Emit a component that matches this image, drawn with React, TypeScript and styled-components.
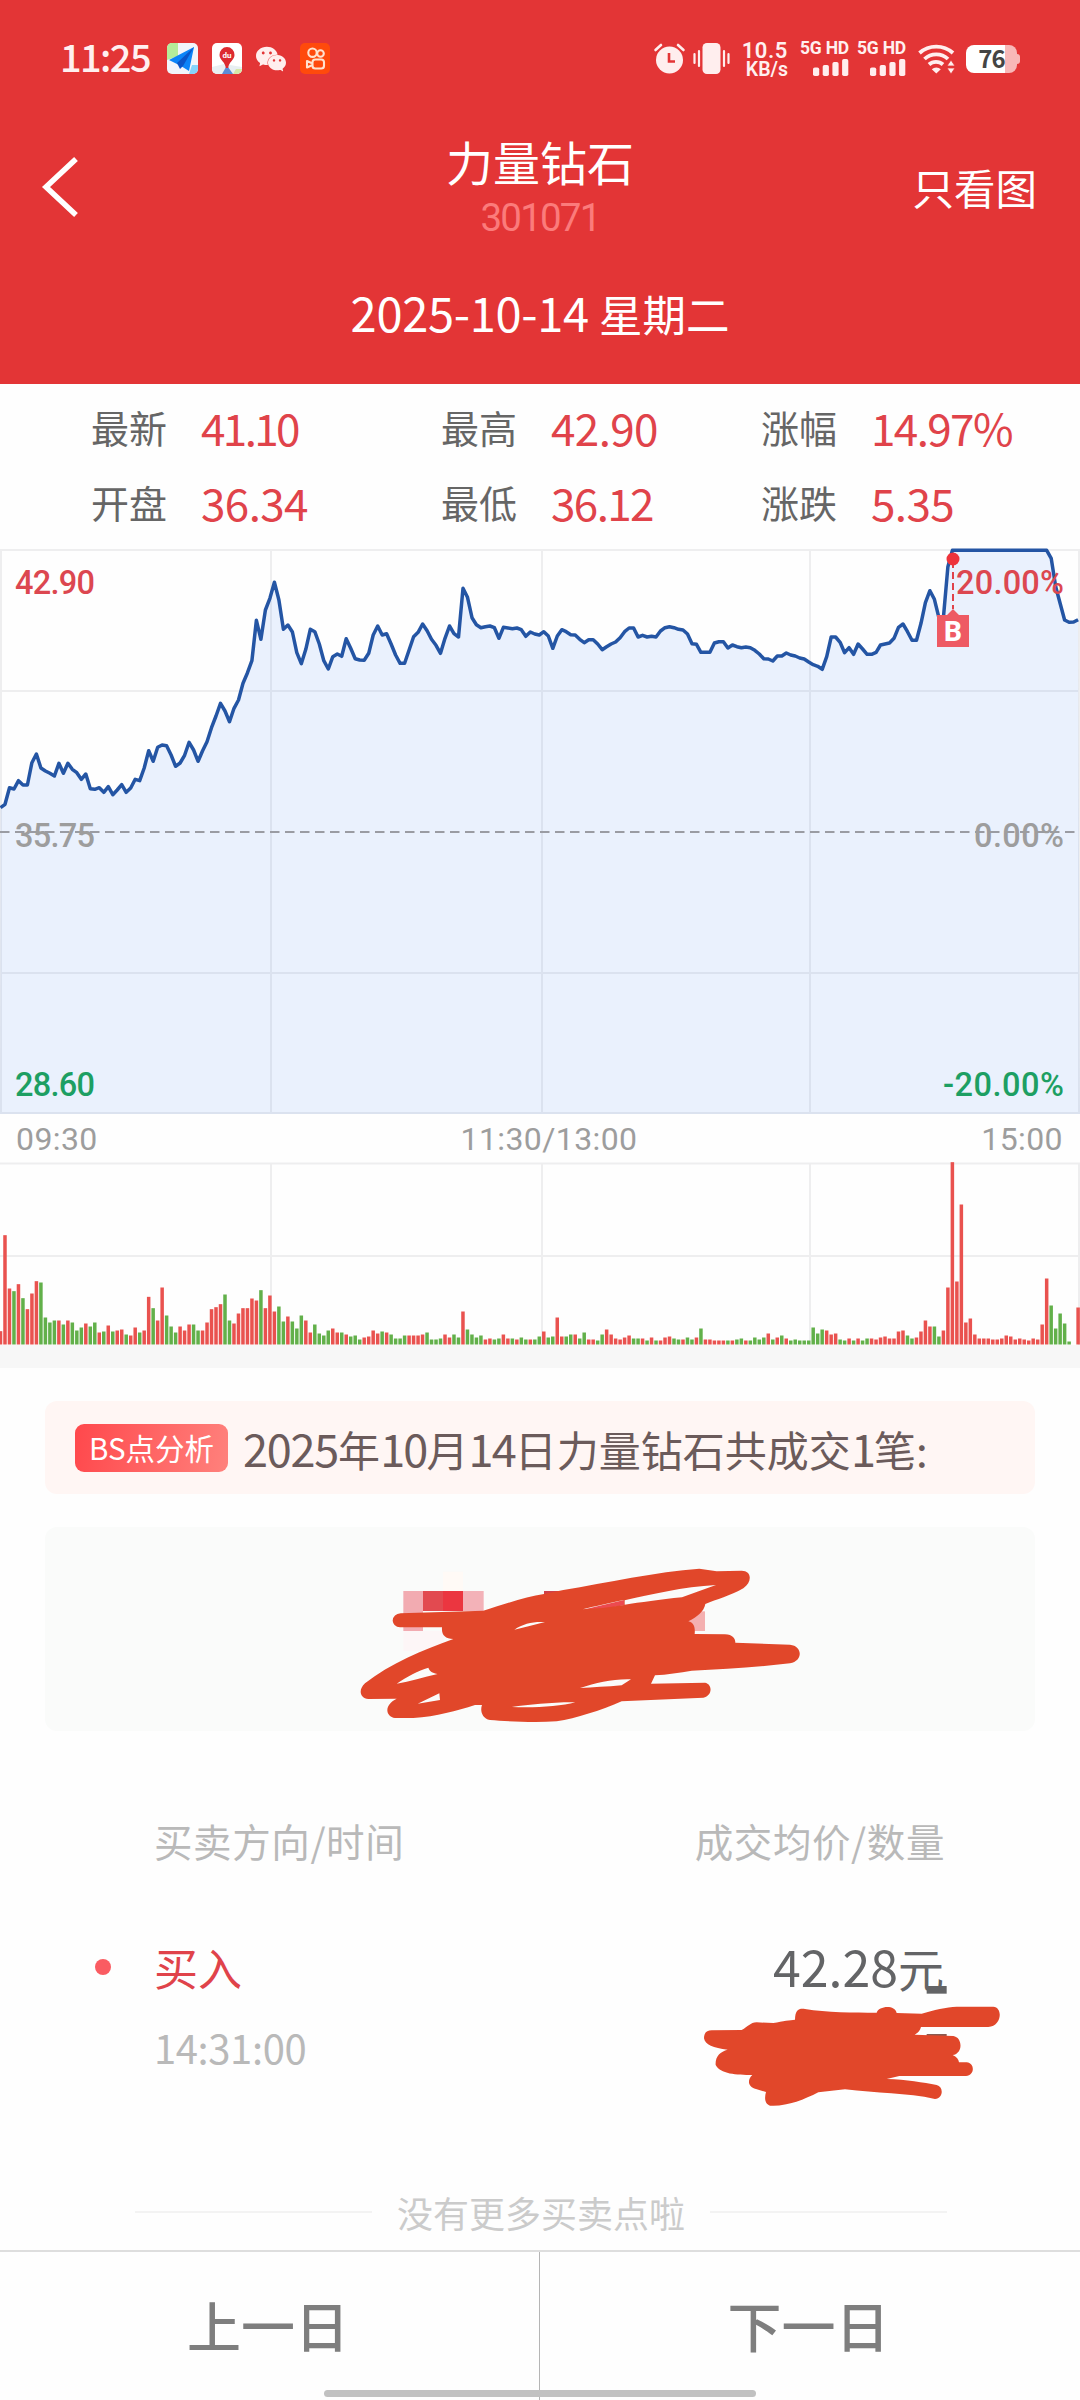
import React from "react";
import styled, { createGlobalStyle } from "styled-components";
import { SiWechat } from "react-icons/si";

const GlobalStyle = createGlobalStyle`
  * { box-sizing: border-box; }
  html, body { margin: 0; padding: 0; background: #fff; }
  body { font-family: "Noto Sans CJK SC", "Noto Sans", sans-serif; }
  svg { display: block; flex: none; overflow: visible; }
`;

const RED = "#e33536";
const INK = "#e1472a";

/* ---------- layout ---------- */

const Screen = styled.div`
  width: 1080px;
  height: 2400px;
  display: flex;
  flex-direction: column;
  background: #fefefe;
  overflow: hidden;
`;

const Header = styled.header`
  height: 384px;
  flex: none;
  background: ${RED};
  color: #fff;
  display: flex;
  flex-direction: column;
`;

const StatusBar = styled.div`
  height: 117px;
  padding: 0 63px 0 60px;
  display: flex;
  align-items: center;
  color: #fff0f0;
`;

const Clock = styled.span`
  width: 107px;
  padding-bottom: 5px;
  font-size: 38px;
  font-weight: 500;
  line-height: 40px;
  letter-spacing: -1.6px;
  white-space: nowrap;
`;

const AppIcons = styled.div`
  display: flex;
  align-items: center;
  gap: 14px;
`;

const StatusRight = styled.div`
  margin-left: auto;
  display: flex;
  align-items: center;
`;

const Speed = styled.div`
  width: 46px;
  margin: 0 12px 0 12px;
  display: flex;
  flex-direction: column;
  align-items: flex-end;
  font-family: Roboto, "Noto Sans", sans-serif;
  font-weight: 600;
  font-size: 19.5px;
  line-height: 17px;
  white-space: nowrap;
`;

const SpeedValue = styled.span`
  font-size: 22px;
  line-height: 21px;
  letter-spacing: 0.6px;
`;

const Signal = styled.div`
  width: 49px;
  margin-right: 8px;
  display: flex;
  flex-direction: column;
  align-items: flex-end;
  gap: 4px;
  font-family: Roboto, "Noto Sans", sans-serif;
  font-weight: 700;
  font-size: 17.5px;
  line-height: 13px;
  letter-spacing: -0.2px;
  white-space: nowrap;
`;

const Battery = styled.div`
  width: 51px;
  height: 28px;
  margin-left: 11px;
  border-radius: 8px;
  position: relative;
  display: flex;
  align-items: center;
  justify-content: center;
  background: linear-gradient(90deg, #fff 76%, #f8b8b8 76%);
  color: #444;
  font-size: 24px;
  font-weight: 700;
  letter-spacing: -1px;
  line-height: 26px;
  padding-bottom: 2px;
  &::after {
    content: "";
    position: absolute;
    right: -3px;
    top: 9px;
    width: 4px;
    height: 10px;
    border-radius: 0 3px 3px 0;
    background: #f8b8b8;
  }
`;

const NavBar = styled.div`
  height: 137px;
  display: grid;
  grid-template-columns: 300px 1fr 300px;
  align-items: center;
  padding-top: 2px;
`;

const Back = styled.div`
  padding-left: 42px;
`;

const TitleBlock = styled.div`
  display: flex;
  flex-direction: column;
  align-items: center;
`;

const Title = styled.div`
  font-size: 47px;
  line-height: 56px;
`;

const Code = styled.div`
  font-family: Roboto, "Noto Sans", sans-serif;
  font-size: 38.5px;
  line-height: 44px;
  padding-top: 7px;
  letter-spacing: -1.8px;
  color: #fb7b7b;
`;

const NavAction = styled.div`
  justify-self: end;
  padding: 0 43px 0 0;
  font-size: 41.5px;
  line-height: 50px;
`;

const DateLine = styled.div`
  flex: 1;
  display: flex;
  justify-content: center;
  align-items: baseline;
  gap: 10px;
  padding-top: 23px;
  font-size: 43.5px;
  line-height: 70px;
`;

const Digits = styled.span<{ $size: number; $track?: number }>`
  font-size: ${(p) => p.$size}px;
  letter-spacing: ${(p) => p.$track ?? 0}px;
`;

const Stats = styled.section`
  height: 165px;
  flex: none;
  padding: 5px 0 0 91px;
  display: grid;
  grid-template-columns: 350px 320px 1fr;
  grid-auto-rows: 75px;
`;

const Stat = styled.div`
  display: flex;
  align-items: center;
`;

const StatLabel = styled.span`
  width: 110px;
  font-size: 38px;
  line-height: 50px;
  color: #666;
`;

const StatValue = styled.span<{ $track: number }>`
  font-size: 44px;
  line-height: 50px;
  color: #e0434a;
  letter-spacing: ${(p) => p.$track}px;
`;

const TimeAxis = styled.div`
  height: 48px;
  flex: none;
  padding: 0 17px 0 16px;
  display: grid;
  grid-template-columns: 1fr auto 1fr;
  align-items: center;
  font-family: Roboto, "Noto Sans", sans-serif;
  font-size: 32px;
  color: #9d9d9d;
  letter-spacing: 0.4px;
  & > :nth-child(2) { padding-left: 19px; }
  & > :last-child { text-align: right; }
`;

const Band = styled.div`
  height: 23px;
  flex: none;
  background: #f7f7f7;
`;

const Notice = styled.section`
  margin: 33px 45px 0;
  height: 93px;
  flex: none;
  border-radius: 12px;
  background: #fff6f4;
  display: flex;
  align-items: center;
  padding: 1px 0 0 30px;
  gap: 15px;
  font-size: 42px;
  color: #6b5b5b;
  white-space: nowrap;
`;

const Badge = styled.span`
  width: 153px;
  height: 48px;
  border-radius: 9px;
  background: linear-gradient(100deg, #ff484c, #ff817c);
  color: #fff;
  font-size: 29.5px;
  line-height: 46px;
  text-align: center;
`;

const NoticeText = styled.span`
  display: flex;
  align-items: baseline;
  line-height: 60px;
`;

const HiddenCard = styled.section`
  margin: 33px 45px 0;
  height: 204px;
  flex: none;
  border-radius: 12px;
  background: #fafbfa;
  padding: 13px 0 0 295px;
`;

const TableHead = styled.div`
  margin-top: 79px;
  height: 60px;
  flex: none;
  padding: 0 135px 0 154px;
  display: flex;
  justify-content: space-between;
  align-items: center;
  font-size: 38.5px;
  letter-spacing: 0.6px;
  color: #b9b9b9;
`;

const Trade = styled.div`
  margin-top: 62px;
  height: 221px;
  flex: none;
  padding: 0 136px 0 95px;
  display: flex;
  position: relative;
`;

const Dot = styled.i`
  width: 16px;
  height: 16px;
  margin: 27px 43px 0 0;
  border-radius: 50%;
  background: #fa5c62;
`;

const TradeCol = styled.div<{ $end?: boolean }>`
  display: flex;
  flex-direction: column;
  ${(p) => p.$end && "margin-left: auto; align-items: flex-end;"}
`;

const Side = styled.div`
  font-size: 44px;
  line-height: 70px;
  color: #e0434a;
`;

const Time = styled.div`
  margin-top: 15px;
  font-size: 40px;
  line-height: 60px;
  letter-spacing: -0.4px;
  color: #b9b9b9;
`;

const Price = styled.div`
  display: flex;
  align-items: baseline;
  font-size: 46px;
  line-height: 66px;
  color: #636466;
`;

const TradeMask = styled.svg`
  position: absolute;
  left: 660px;
  top: -12px;
`;

const EndNote = styled.div`
  height: 60px;
  flex: none;
  margin-top: 29px;
  padding: 0 133px 0 135px;
  display: flex;
  align-items: center;
  justify-content: space-between;
  font-size: 36px;
  color: #cbcbcb;
`;

const Rule = styled.i`
  width: 237px;
  height: 2px;
  background: #f3f3f3;
`;

const Footer = styled.footer`
  margin-top: auto;
  height: 150px;
  flex: none;
  border-top: 2px solid #dedede;
  display: grid;
  grid-template-columns: 1fr 1fr;
  position: relative;
`;

const DayButton = styled.button<{ $divided?: boolean }>`
  border: 0;
  padding: 0 3px 2px 0;
  background: none;
  font: 500 54px/60px "Noto Sans CJK SC", sans-serif;
  color: #7e7e7e;
  ${(p) => p.$divided && "border-right: 1px solid #b5b5b5;"}
`;

const HomeBar = styled.i`
  position: absolute;
  left: 324px;
  bottom: 3px;
  width: 432px;
  height: 7px;
  border-radius: 4px;
  background: #c1c1c1;
`;

/* ---------- chart data, one sample per minute ---------- */

const STEP = 4.49;
const minuteX = (i: number) => 0.5 + i * STEP;

// Price samples, measured downwards in thirds of a pixel.
const PRICES = [
  1253, 1243, 1193, 1197, 1172, 1185, 1185, 1118, 1092, 1134, 1143, 1150, 1158, 1120, 1150, 1120, 1138, 1148, 1168, 1152,
  1196, 1198, 1193, 1207, 1190, 1214, 1200, 1184, 1207, 1194, 1168, 1172, 1134, 1082, 1114, 1072, 1065, 1067, 1095, 1129,
  1119, 1096, 1057, 1080, 1114, 1082, 1055, 1013, 978, 940, 963, 995, 955, 930, 880, 848, 812, 691, 748, 660,
  625, 577, 630, 718, 705, 726, 788, 821, 778, 718, 725, 762, 812, 837, 800, 792, 799, 746, 775, 806,
  810, 811, 790, 735, 708, 735, 731, 762, 795, 820, 820, 780, 740, 727, 702, 722, 748, 766, 790, 745,
  708, 731, 741, 595, 622, 683, 704, 713, 710, 708, 713, 745, 712, 714, 716, 714, 719, 739, 726, 732,
  735, 725, 738, 775, 738, 719, 725, 734, 735, 748, 758, 749, 749, 762, 779, 770, 762, 756, 743, 725,
  714, 714, 741, 736, 741, 739, 741, 723, 713, 710, 713, 718, 720, 732, 761, 763, 787, 787, 787, 759,
  755, 755, 774, 765, 770, 773, 771, 773, 781, 792, 806, 807, 813, 798, 798, 789, 795, 798, 804, 807,
  816, 824, 829, 838, 800, 741, 741, 757, 788, 773, 793, 762, 777, 793, 793, 787, 765, 762, 759, 745,
  712, 702, 725, 751, 751, 700, 638, 602, 628, 683, 683, 530, 481, 481, 481, 481, 481, 481, 481, 481,
  481, 481, 481, 481, 481, 481, 481, 481, 481, 481, 481, 481, 481, 481, 505, 590, 640, 690, 697, 696, 689,
];

// Volume samples in thirds of a pixel; negative values are falling minutes.
const VOLUMES = [
  40, 328, 168, -160, 181, -139, 106, 153, 190, -186, -81, -66, -72, 72, -60, 72, -66, -42, -51, 63,
  -54, -66, 36, -39, 57, -39, 42, 45, -30, 27, 51, -36, 42, 143, -109, 72, 171, -87, -54, -36,
  54, 42, 60, -60, -42, 42, 66, 106, 112, 121, -150, -72, 63, 93, 109, 109, 138, 132, -163, 109,
  147, 99, -114, -69, 84, -69, -48, -87, 72, 36, -60, -33, -27, -42, 48, 36, -36, 30, -24, -27,
  -15, 21, 24, 42, 33, -39, 36, -30, -18, -18, -27, 27, 27, 27, 30, -36, -15, -15, -18, 30,
  21, -30, -21, 99, -45, -30, -21, -27, 15, 18, -15, -18, 30, 18, -18, 15, -21, -15, 15, -15,
  -24, 39, -21, -24, 81, 24, -24, -30, 30, -18, -36, 15, 15, -12, -30, 45, 30, 18, 15, 21,
  27, -18, -18, 18, -12, 21, -12, 12, 21, 24, -18, -15, 15, -21, -15, 21, -48, 15, 15, 12,
  12, 12, -12, 12, -15, -18, 12, -12, -21, -15, -21, 33, -15, 21, -27, 18, -12, -15, -12, -12,
  -12, -51, -33, -45, 42, 30, 33, -15, -12, 18, -12, 18, -12, -18, 18, 15, 21, 24, 18, 18,
  39, 42, -27, -18, 21, 39, 72, 54, -54, -24, 42, 171, 547, 189, 420, 66, 78, 30, 18, 18,
  18, 15, 15, 18, 27, 24, 15, 18, 15, 12, 18, 15, 60, 198, -117, -48, -93, -63, -9, 0, 111,
];

const GRID_X = [1, 271, 542, 810, 1079];

function PriceChart() {
  const line = PRICES.map((v, i) => `${minuteX(i).toFixed(1)},${((v - 480) / 3 + 1).toFixed(1)}`).join(" ");
  const label = { fontFamily: 'Roboto, "Noto Sans", sans-serif', fontSize: 32.5, fontWeight: 500 };
  return (
    <svg width="1080" height="566" viewBox="0 0 1080 566">
      <g stroke="#eeeeef" strokeWidth="2">
        {[1, 142, 424, 564].map((y) => <line key={y} x1="0" x2="1080" y1={y} y2={y} />)}
        {GRID_X.map((x) => <line key={x} x1={x} x2={x} y1="1" y2="564" />)}
      </g>
      <polygon points={`0,565 ${line} 1080,565`} fill="#4a86f5" fillOpacity="0.11" />
      <line x1="0" x2="1080" y1="283" y2="283" stroke="#9a9ca3" strokeWidth="2" strokeDasharray="9.5 5.5" />
      <polyline points={line} fill="none" stroke="#2455a4" strokeWidth="3.5" strokeLinejoin="round" />
      <line x1="953" x2="953" y1="12" y2="60" stroke="#e0434a" strokeWidth="2" strokeDasharray="7 4" />
      <circle cx="953" cy="10" r="6.5" fill="#ee333b" />
      <path d="M937 66h10l6-6 6 6h10v32h-32z" fill="#ee5a63" />
      <text x="953" y="92" textAnchor="middle" fill="#fff" fontFamily="Roboto, sans-serif" fontSize="28" fontWeight="800">B</text>
      <g {...label}>
        <text x="15" y="44.5" textLength="80" fill="#dc4750">42.90</text>
        <text x="956" y="44.5" textLength="108" fill="#dc4750">20.00%</text>
        <text x="15" y="297.5" textLength="80" fill="#9d9d9d">35.75</text>
        <text x="974" y="297.5" textLength="90" fill="#9d9d9d">0.00%</text>
        <text x="15" y="547" textLength="80" fill="#1d9f63">28.60</text>
        <text x="943" y="547" textLength="121" fill="#1d9f63">-20.00%</text>
      </g>
    </svg>
  );
}

function VolumeChart() {
  return (
    <svg width="1080" height="182" viewBox="0 0 1080 182">
      <g stroke="#eeeeef" strokeWidth="2">
        <line x1="0" x2="1080" y1="0.5" y2="0.5" />
        <line x1="0" x2="1080" y1="93" y2="93" />
        {GRID_X.slice(1).map((x) => <line key={x} x1={x} x2={x} y1="1" y2="182" />)}
      </g>
      {VOLUMES.map((v, i) => {
        const h = Math.abs(v) / 3;
        return <rect key={i} x={minuteX(i) - 1.75} y={181.5 - h} width="3.5" height={h} fill={v < 0 ? "#62b04a" : "#e9524f"} />;
      })}
    </svg>
  );
}

/* ---------- status icons ---------- */

const NavigatorIcon = () => (
  <svg width="31" height="31" viewBox="0 0 31 31">
    <rect width="31" height="31" rx="5" fill="#f1f5fb" />
    <path d="M0 5a5 5 0 0 1 5-5h6v13L0 17z" fill="#b5ec9a" />
    <path d="M22 31l3-9h6v4a5 5 0 0 1-5 5z" fill="#86d3fb" />
    <path d="M2 17L27 4 22 28 14 23z" fill="#0b84f8" />
    <path d="M27 4L10 20l3 6 3-3z" fill="#0a55c8" />
  </svg>
);

const BaiduMapIcon = () => (
  <svg width="30" height="31" viewBox="0 0 30 31">
    <rect width="30" height="31" rx="5" fill="#fff" />
    <path d="M0 24l12-3 18 3v2a5 5 0 0 1-5 5H5a5 5 0 0 1-5-5z" fill="#e8eff2" />
    <path d="M21 31l3-5h6a5 5 0 0 1-5 5z" fill="#d5e8a8" />
    <path d="M10 31l4-7h2l5 7z" fill="#5b8bd6" />
    <path d="M15 4a7.6 7.6 0 0 1 7.5 8c0 5-6 7-6.3 13h-2.4C13.5 19 7.5 17 7.5 12A7.6 7.6 0 0 1 15 4z" fill="#dd2b30" />
    <text x="15" y="15" textAnchor="middle" fill="#fff" fontSize="8" fontWeight="700" fontFamily="Roboto, sans-serif">du</text>
  </svg>
);

const KuaishouIcon = () => (
  <svg width="30" height="31" viewBox="0 0 30 31">
    <rect width="30" height="31" rx="5" fill="#ff4a0c" />
    <g fill="none" stroke="#ffe3cf" strokeWidth="2.1">
      <circle cx="12.5" cy="9.7" r="4.2" />
      <circle cx="20.5" cy="10.5" r="3.3" />
      <rect x="12.5" y="16.5" width="11.5" height="9" rx="2.8" />
      <path d="M12 20.2L7 18v6.500l5-2.300" strokeLinejoin="round" />
    </g>
  </svg>
);

const AlarmIcon = () => (
  <svg width="31" height="31" viewBox="0 0 31 31">
    <circle cx="15.5" cy="17" r="13.5" fill="#ffeeee" />
    <path d="M1.500 7L7 2M29.500 7L24 2" stroke="#ffeeee" strokeWidth="2.6" strokeLinecap="round" />
    <path d="M15 10v8.500h6" fill="none" stroke={RED} strokeWidth="2.6" />
  </svg>
);

const VibrateIcon = () => (
  <svg width="37" height="31" viewBox="0 0 37 31">
    <rect x="9.5" y="0" width="18" height="31" rx="4.5" fill="#ffeeee" />
    <path d="M1.500 11v9M6 8v15M31 8v15M35.500 11v9" stroke="#ffeeee" strokeWidth="2.2" strokeLinecap="round" />
  </svg>
);

const SignalBars = () => (
  <svg width="36" height="17" viewBox="0 0 36 17">
    {[8.5, 11, 14, 17].map((h, i) => (
      <rect key={h} x={i * 9.7} y={17 - h} width="6.2" height={h} rx="1.8" fill="#ffeeee" />
    ))}
  </svg>
);

const WifiIcon = () => (
  <svg width="37" height="30" viewBox="0 0 37 30">
    <g fill="none" stroke="#ffeeee" strokeWidth="3.8">
      <path d="M1.500 9a25 25 0 0 1 33.500 0" />
      <path d="M6.500 15a17 17 0 0 1 23.500 0" />
      <path d="M11 20.500a10.500 10.500 0 0 1 14 0" />
    </g>
    <path d="M13.800 25.300a6.500 6.500 0 0 1 9 0l-4.500 4.200z" fill="#ffeeee" />
    <path d="M29 22l4-6 4 6zM29 24h8l-4 6z" fill="#ffeeee" stroke={RED} strokeWidth="0.8" />
  </svg>
);

/* ---------- marker strokes over private values ---------- */

const AmountMask = () => (
  <svg width="480" height="200" viewBox="0 0 1440 600">
    <rect x="309" y="95" width="60" height="58" fill="#fffaf6" />
    <rect x="190" y="273" width="120" height="60" fill="#fdf6f7" />
    <rect x="190" y="153" width="59" height="120" fill="#f2abb1" />
    <rect x="249" y="153" width="60" height="60" fill="#e24a50" />
    <rect x="309" y="153" width="60" height="60" fill="#eb3640" />
    <rect x="369" y="153" width="62" height="60" fill="#f3b2b8" />
    <rect x="612" y="153" width="60" height="30" fill="#cf4048" />
    <path d="M725 210L852 180V196L760 212z" fill="#ec4a4f" />
    <rect x="1035" y="214" width="60" height="59" fill="#f4b0b0" />
    <path
      fill={INK}
      fillRule="evenodd"
      d="M158 242Q160 222 182 220L430 212C500 190 560 170 612 162L670 150C800 128 950 95 1078 86L1130 94L1205 92C1235 92 1238 125 1210 145C1170 168 1130 178 1096 192C1092 215 1070 232 1045 244C1062 248 1066 262 1064 282L1155 283C1178 284 1186 295 1186 308L1350 314C1388 318 1390 362 1350 370C1250 382 1150 388 1055 392C1020 398 980 404 945 406L933 431L1095 428C1118 432 1118 468 1090 473L845 484C780 512 710 535 650 544C580 548 500 544 450 540C425 535 420 510 426 495L405 495C350 512 290 530 220 534L165 534C135 528 132 495 170 476L85 477C58 474 55 448 75 430C150 370 250 330 340 297C315 296 304 285 306 262L180 262Q160 260 158 242Z
      M170 431C210 424 250 412 293 402C280 399 270 396 265 383C235 392 200 410 170 431Z
      M233 491L298 460L300 480Z
      M523 269C550 250 580 244 615 246Q570 258 523 269Z
      M515 501C580 504 660 500 706 487C640 486 570 494 515 501Z
      M720 444C770 428 820 416 873 418L845 436C800 440 760 442 720 444Z
      M854 181C930 164 1030 140 1128 135L1026 172C960 178 900 188 854 194Z
      M728 208C760 200 810 188 852 180V195Q790 206 728 208Z"
    />
  </svg>
);

const QuantityMask = () => (
  <TradeMask width="380" height="200" viewBox="0 0 1140 600">
    <rect x="800" y="198" width="60" height="23" fill="#636466" />
    <rect x="800" y="342" width="60" height="10" fill="#8a5a50" />
    <path
      fill={INK}
      d="M132 355C132 338 140 332 155 331L245 330C265 320 270 308 290 307L340 309C370 303 390 300 405 299C406 270 415 265 435 267C500 278 580 278 650 278C655 258 705 252 710 279L785 281C820 270 860 261 890 260L1000 260C1030 262 1025 320 985 321L783 321C780 335 770 340 764 344L880 348C908 352 910 400 878 405C890 410 896 418 897 427L920 427C945 430 945 465 918 468L718 468L680 477C740 478 790 488 830 495C852 500 850 535 825 537C740 518 650 520 555 508L475 517C430 540 380 560 330 557C312 550 314 530 318 516L288 507C262 500 262 478 277 465C230 465 180 462 167 435C165 410 180 395 203 389C160 384 135 375 132 355Z"
    />
  </TradeMask>
);

/* ---------- page ---------- */

const STATS = [
  ["最新", "41.10"],
  ["最高", "42.90"],
  ["涨幅", "14.97%"],
  ["开盘", "36.34"],
  ["最低", "36.12"],
  ["涨跌", "5.35"],
];

// The digit 1 is set tighter than the others.
const trackFor = (value: string) => -0.6 - (value.split("1").length - 1) * 1;

const IconGap = styled.span<{ $w: number }>`
  width: ${(p) => p.$w}px;
`;

export default function App() {
  return (
    <Screen>
      <GlobalStyle />
      <Header>
        <StatusBar>
          <Clock>11:25</Clock>
          <AppIcons>
            <NavigatorIcon />
            <BaiduMapIcon />
            <SiWechat size={30} color="#ffeeee" />
            <KuaishouIcon />
          </AppIcons>
          <StatusRight>
            <AlarmIcon />
            <IconGap $w={8} />
            <VibrateIcon />
            <Speed>
              <SpeedValue>10.5</SpeedValue>
              <span>KB/s</span>
            </Speed>
            <Signal>
              5G HD
              <SignalBars />
            </Signal>
            <Signal>
              5G HD
              <SignalBars />
            </Signal>
            <IconGap $w={4} />
            <WifiIcon />
            <Battery>76</Battery>
          </StatusRight>
        </StatusBar>
        <NavBar>
          <Back>
            <svg width="36" height="60" viewBox="0 0 36 60">
              <path d="M34 2L4 30L34 58" fill="none" stroke="#fff" strokeWidth="5.5" />
            </svg>
          </Back>
          <TitleBlock>
            <Title>力量钻石</Title>
            <Code>301071</Code>
          </TitleBlock>
          <NavAction>只看图</NavAction>
        </NavBar>
        <DateLine>
          <Digits $size={47} $track={-0.3}>2025-10-14</Digits>
          <span>星期二</span>
        </DateLine>
      </Header>

      <Stats>
        {STATS.map(([name, value]) => (
          <Stat key={name}>
            <StatLabel>{name}</StatLabel>
            <StatValue $track={trackFor(value)}>{value}</StatValue>
          </Stat>
        ))}
      </Stats>

      <PriceChart />
      <TimeAxis>
        <span>09:30</span>
        <span>11:30/13:00</span>
        <span>15:00</span>
      </TimeAxis>
      <VolumeChart />
      <Band />

      <Notice>
        <Badge>BS点分析</Badge>
        <NoticeText>
          <Digits $size={45} $track={-1.2}>2025</Digits>年
          <Digits $size={45} $track={-1.8}>10</Digits>月
          <Digits $size={45} $track={-1.8}>14</Digits>日力量钻石共成交
          <Digits $size={45} $track={-1.8}>1</Digits>笔:
        </NoticeText>
      </Notice>

      <HiddenCard>
        <AmountMask />
      </HiddenCard>

      <TableHead>
        <span>买卖方向/时间</span>
        <span>成交均价/数量</span>
      </TableHead>

      <Trade>
        <Dot />
        <TradeCol>
          <Side>买入</Side>
          <Time>14:31:00</Time>
        </TradeCol>
        <TradeCol $end>
          <Price>
            <Digits $size={50} $track={0}>42.28</Digits>元
          </Price>
        </TradeCol>
        <QuantityMask />
      </Trade>

      <EndNote>
        <Rule />
        <span>没有更多买卖点啦</span>
        <Rule />
      </EndNote>

      <Footer>
        <DayButton $divided>上一日</DayButton>
        <DayButton>下一日</DayButton>
        <HomeBar />
      </Footer>
    </Screen>
  );
}
